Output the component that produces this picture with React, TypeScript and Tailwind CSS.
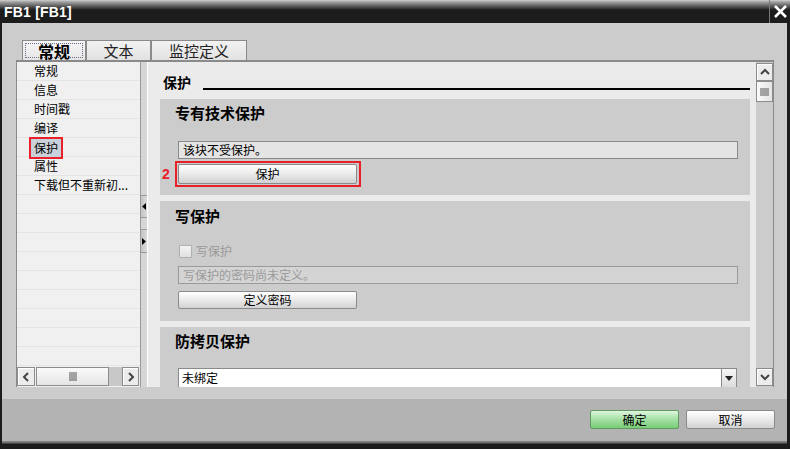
import React from 'react';

const listItems = ['常规', '信息', '时间戳', '编译', '保护', '属性', '下载但不重新初...'];

function Btn({ label, className = '' }: { label: string; className?: string }) {
  return (
    <div
      className={`flex items-center justify-center border border-[#8a8a8a] rounded-[2px] bg-[linear-gradient(#ffffff,#ececec_45%,#d2d2d2)] text-[12px] leading-none text-black ${className}`}
    >
      {label}
    </div>
  );
}

function ScrollBtn({ dir }: { dir: 'up' | 'down' | 'left' | 'right' }) {
  const paths: Record<string, string> = {
    up: 'M2 8 L6 4 L10 8',
    down: 'M2 4 L6 8 L10 4',
    left: 'M8 2 L4 6 L8 10',
    right: 'M4 2 L8 6 L4 10',
  };
  return (
    <div className="w-full h-full flex items-center justify-center border border-[#8c8c8c] bg-[#ececec] shadow-[inset_1px_1px_0_#ffffff]">
      <svg width="12" height="12" viewBox="0 0 12 12">
        <path d={paths[dir]} fill="none" stroke="#444" strokeWidth="2" />
      </svg>
    </div>
  );
}

function Section({ children, className = '' }: { children: React.ReactNode; className?: string }) {
  return <div className={`shrink-0 bg-[#cccccc] w-[590px] flex flex-col ${className}`}>{children}</div>;
}

export default function App() {
  return (
    <div className="w-[790px] h-[449px] flex flex-col bg-[#1c1c1c] overflow-hidden font-['Noto_Sans_CJK_SC','Liberation_Sans',sans-serif]">
      {/* Title bar */}
      <div className="h-[23px] shrink-0 flex items-stretch bg-[linear-gradient(#d0d0d0_0px,#a0a0a0_2px,#5e5e5e_6px,#1c1c1c_10px)]">
        <span className="pl-[4px] pt-[4px] text-white text-[14px] leading-[16px] font-bold font-['Liberation_Sans',sans-serif] tracking-[0.2px]">
          FB1 [FB1]
        </span>
        <div className="ml-auto w-[21px] border-l border-[#7a7a7a] flex items-center justify-center">
          <svg width="15" height="15" viewBox="0 0 15 15">
            <path d="M2 2 L13 13 M13 2 L2 13" stroke="#ffffff" strokeWidth="2.6" />
          </svg>
        </div>
      </div>

      {/* Body */}
      <div className="flex-1 flex flex-col ml-[2px] mr-[3px] bg-[#cccccc]">
        <div className="h-[17px] shrink-0" />

        {/* Tabs */}
        <div className="h-[20px] shrink-0 flex pl-[20px]">
          <div className="w-[64px] h-full border border-b-0 border-[#8a8a8a] bg-[linear-gradient(#f6f6f6,#e6e6e6)] p-[2px]">
            <div className="w-full h-full border border-dotted border-[#6a6a8a] flex items-center justify-center text-[16px] font-bold text-black leading-none">
              常规
            </div>
          </div>
          <div className="w-[65px] h-full border border-b-0 border-[#8a8a8a] bg-[linear-gradient(#f2f2f2,#e2e2e2)] flex items-center justify-center text-[15px] text-[#222] leading-none">
            文本
          </div>
          <div className="w-[96px] h-full border border-b-0 border-[#8a8a8a] bg-[linear-gradient(#f2f2f2,#e2e2e2)] flex items-center justify-center text-[15px] text-[#222] leading-none">
            监控定义
          </div>
        </div>

        {/* Panel */}
        <div className="ml-[14px] w-[758px] h-[327px] shrink-0 border-t-2 border-[#8a8a8a] flex">
          {/* Left list */}
          <div className="w-[124px] h-full border-l border-[#8a8a8a] bg-[#f0f0f0] flex flex-col">
            <div className="flex-1 overflow-hidden">
              {Array.from({ length: 16 }).map((_, i) => (
                <div key={i} className="h-[19px] border-b border-[#e4e4e4] flex items-center pl-[17px] text-[12px] text-black leading-none whitespace-nowrap">
                  {listItems[i] === '保护' ? (
                    <span className="-ml-[5px] translate-y-[1px] h-[22px] px-[3px] border-2 border-[#e8202a] bg-[#c9d2da] flex items-center">
                      保护
                    </span>
                  ) : (
                    listItems[i] ?? ''
                  )}
                </div>
              ))}
            </div>
            <div className="h-[19px] mb-[1px] flex items-stretch pr-[1px]">
              <div className="w-[18px]">
                <ScrollBtn dir="left" />
              </div>
              <div className="w-[73px] ml-[1px] border border-[#8c8c8c] bg-[linear-gradient(#fafafa,#e4e4e4)] flex items-center justify-center">
                <svg width="8" height="9" viewBox="0 0 8 9">
                  <path d="M1 0 V9 M3 0 V9 M5 0 V9 M7 0 V9" stroke="#555" strokeWidth="1" />
                </svg>
              </div>
              <div className="flex-1 bg-[#c8c8c8]" />
              <div className="w-[17px]">
                <ScrollBtn dir="right" />
              </div>
            </div>
          </div>

          {/* Splitter */}
          <div className="w-[7px] h-full bg-[#d6d6d6] border-l border-[#9a9a9a] flex flex-col pt-[133px]">
            <div className="h-[23px] bg-[linear-gradient(90deg,#c4c4c4,#dadada)] border-y border-[#999] flex items-center justify-center">
              <svg width="4" height="7" viewBox="0 0 4 7">
                <path d="M4 0 L0 3.5 L4 7 Z" fill="#000" />
              </svg>
            </div>
            <div className="h-[11px]" />
            <div className="h-[24px] bg-[linear-gradient(90deg,#c4c4c4,#dadada)] border-y border-[#999] flex items-center justify-center">
              <svg width="4" height="7" viewBox="0 0 4 7">
                <path d="M0 0 L4 3.5 L0 7 Z" fill="#000" />
              </svg>
            </div>
          </div>
          <div className="w-[1px] h-full bg-white" />

          {/* Content */}
          <div className="w-[608px] h-full bg-[#ebebeb] overflow-hidden pl-[12px] flex flex-col">
            <div className="h-[37px] shrink-0 flex items-start pt-[13px] pr-[6px]">
              <span className="text-[14px] font-bold leading-[15px] pl-[3px] text-black">保护</span>
              <div className="flex-1 ml-[12px] mt-[13px] h-[1.5px] bg-black" />
            </div>

            <Section className="h-[96px] pt-[5px]">
              <div className="h-[17px] pl-[15px] text-[15px] font-bold leading-[17px] text-black">专有技术保护</div>
              <div className="mt-[20px] ml-[18px] w-[560px] h-[18px] border border-[#8a8a8a] bg-[#e4e4e4] flex items-center pl-[4px] text-[12px] leading-none text-black">
                该块不受保护。
              </div>
              <div className="mt-[2px] h-[26px] flex items-center pl-[2px]">
                <span className="w-[13px] text-[14px] font-bold text-[#e8202a] leading-none font-['Liberation_Sans',sans-serif]">2</span>
                <div className="w-[186px] h-[26px] border-2 border-[#e8202a] p-[1px] pr-[2px]">
                  <Btn label="保护" className="w-full h-full" />
                </div>
              </div>
            </Section>

            <Section className="h-[120px] pt-[6px] mt-[6px]">
              <div className="h-[17px] pl-[15px] text-[15px] font-bold leading-[17px] text-black">写保护</div>
              <div className="mt-[20px] ml-[19px] h-[14px] flex items-center gap-[4px]">
                <div className="w-[13px] h-[13px] border border-[#b0b0b0] bg-[linear-gradient(#f4f4f4,#e0e0e0)] rounded-[1px]" />
                <span className="text-[12px] leading-none text-[#9a9a9a]">写保护</span>
              </div>
              <div className="mt-[8px] ml-[18px] w-[560px] h-[18px] border border-[#9a9a9a] bg-[#d4d4d4] flex items-center pl-[4px] text-[12px] leading-none text-[#9a9a9a]">
                写保护的密码尚未定义。
              </div>
              <Btn label="定义密码" className="mt-[7px] ml-[18px] w-[179px] h-[18px]" />
            </Section>

            <Section className="h-[120px] pt-[5px] mt-[6px]">
              <div className="h-[17px] pl-[15px] text-[15px] font-bold leading-[17px] text-black">防拷贝保护</div>
              <div className="mt-[19px] ml-[18px] w-[559px] h-[20px] border border-[#8a8a8a] bg-white flex items-stretch">
                <span className="flex-1 pl-[3px] text-[12px] leading-[18px] text-black">未绑定</span>
                <div className="w-[15px] border-l border-[#8a8a8a] bg-[linear-gradient(#f6f6f6,#dcdcdc)] flex items-center justify-center">
                  <svg width="8" height="5" viewBox="0 0 8 5">
                    <path d="M0 0 H8 L4 5 Z" fill="#222" />
                  </svg>
                </div>
              </div>
            </Section>
          </div>

          {/* Vertical scrollbar */}
          <div className="w-[17px] h-full bg-[#cccccc] flex flex-col py-[1px]">
            <div className="h-[18px]">
              <ScrollBtn dir="up" />
            </div>
            <div className="h-[21px] border border-[#8c8c8c] bg-[linear-gradient(90deg,#fafafa,#e4e4e4)] flex items-center justify-center">
              <svg width="9" height="8" viewBox="0 0 9 8">
                <path d="M0 1 H9 M0 3 H9 M0 5 H9 M0 7 H9" stroke="#555" strokeWidth="1" />
              </svg>
            </div>
            <div className="flex-1" />
            <div className="h-[18px]">
              <ScrollBtn dir="down" />
            </div>
          </div>
          <div className="w-[1px] h-full bg-[#8a8a8a]" />
        </div>

        <div className="h-[12px] shrink-0" />

        {/* Footer */}
        <div className="flex-1 bg-[#b3b3b3] flex justify-end items-start pt-[11px] pr-[12px] gap-[7px]">
          <div className="w-[89px] h-[19px] flex items-center justify-center border border-[#5f9a5f] rounded-[2px] bg-[linear-gradient(#dff5df,#a8e2a8_45%,#78cc78)] text-[12px] leading-none text-black">
            确定
          </div>
          <Btn label="取消" className="w-[89px] h-[19px]" />
        </div>
      </div>
      <div className="h-[8px] shrink-0 ml-[2px] mr-[3px] bg-[linear-gradient(#8a8a8a_0px,#6a6a6a_2px,#1c1c1c_3px)]" />
    </div>
  );
}
